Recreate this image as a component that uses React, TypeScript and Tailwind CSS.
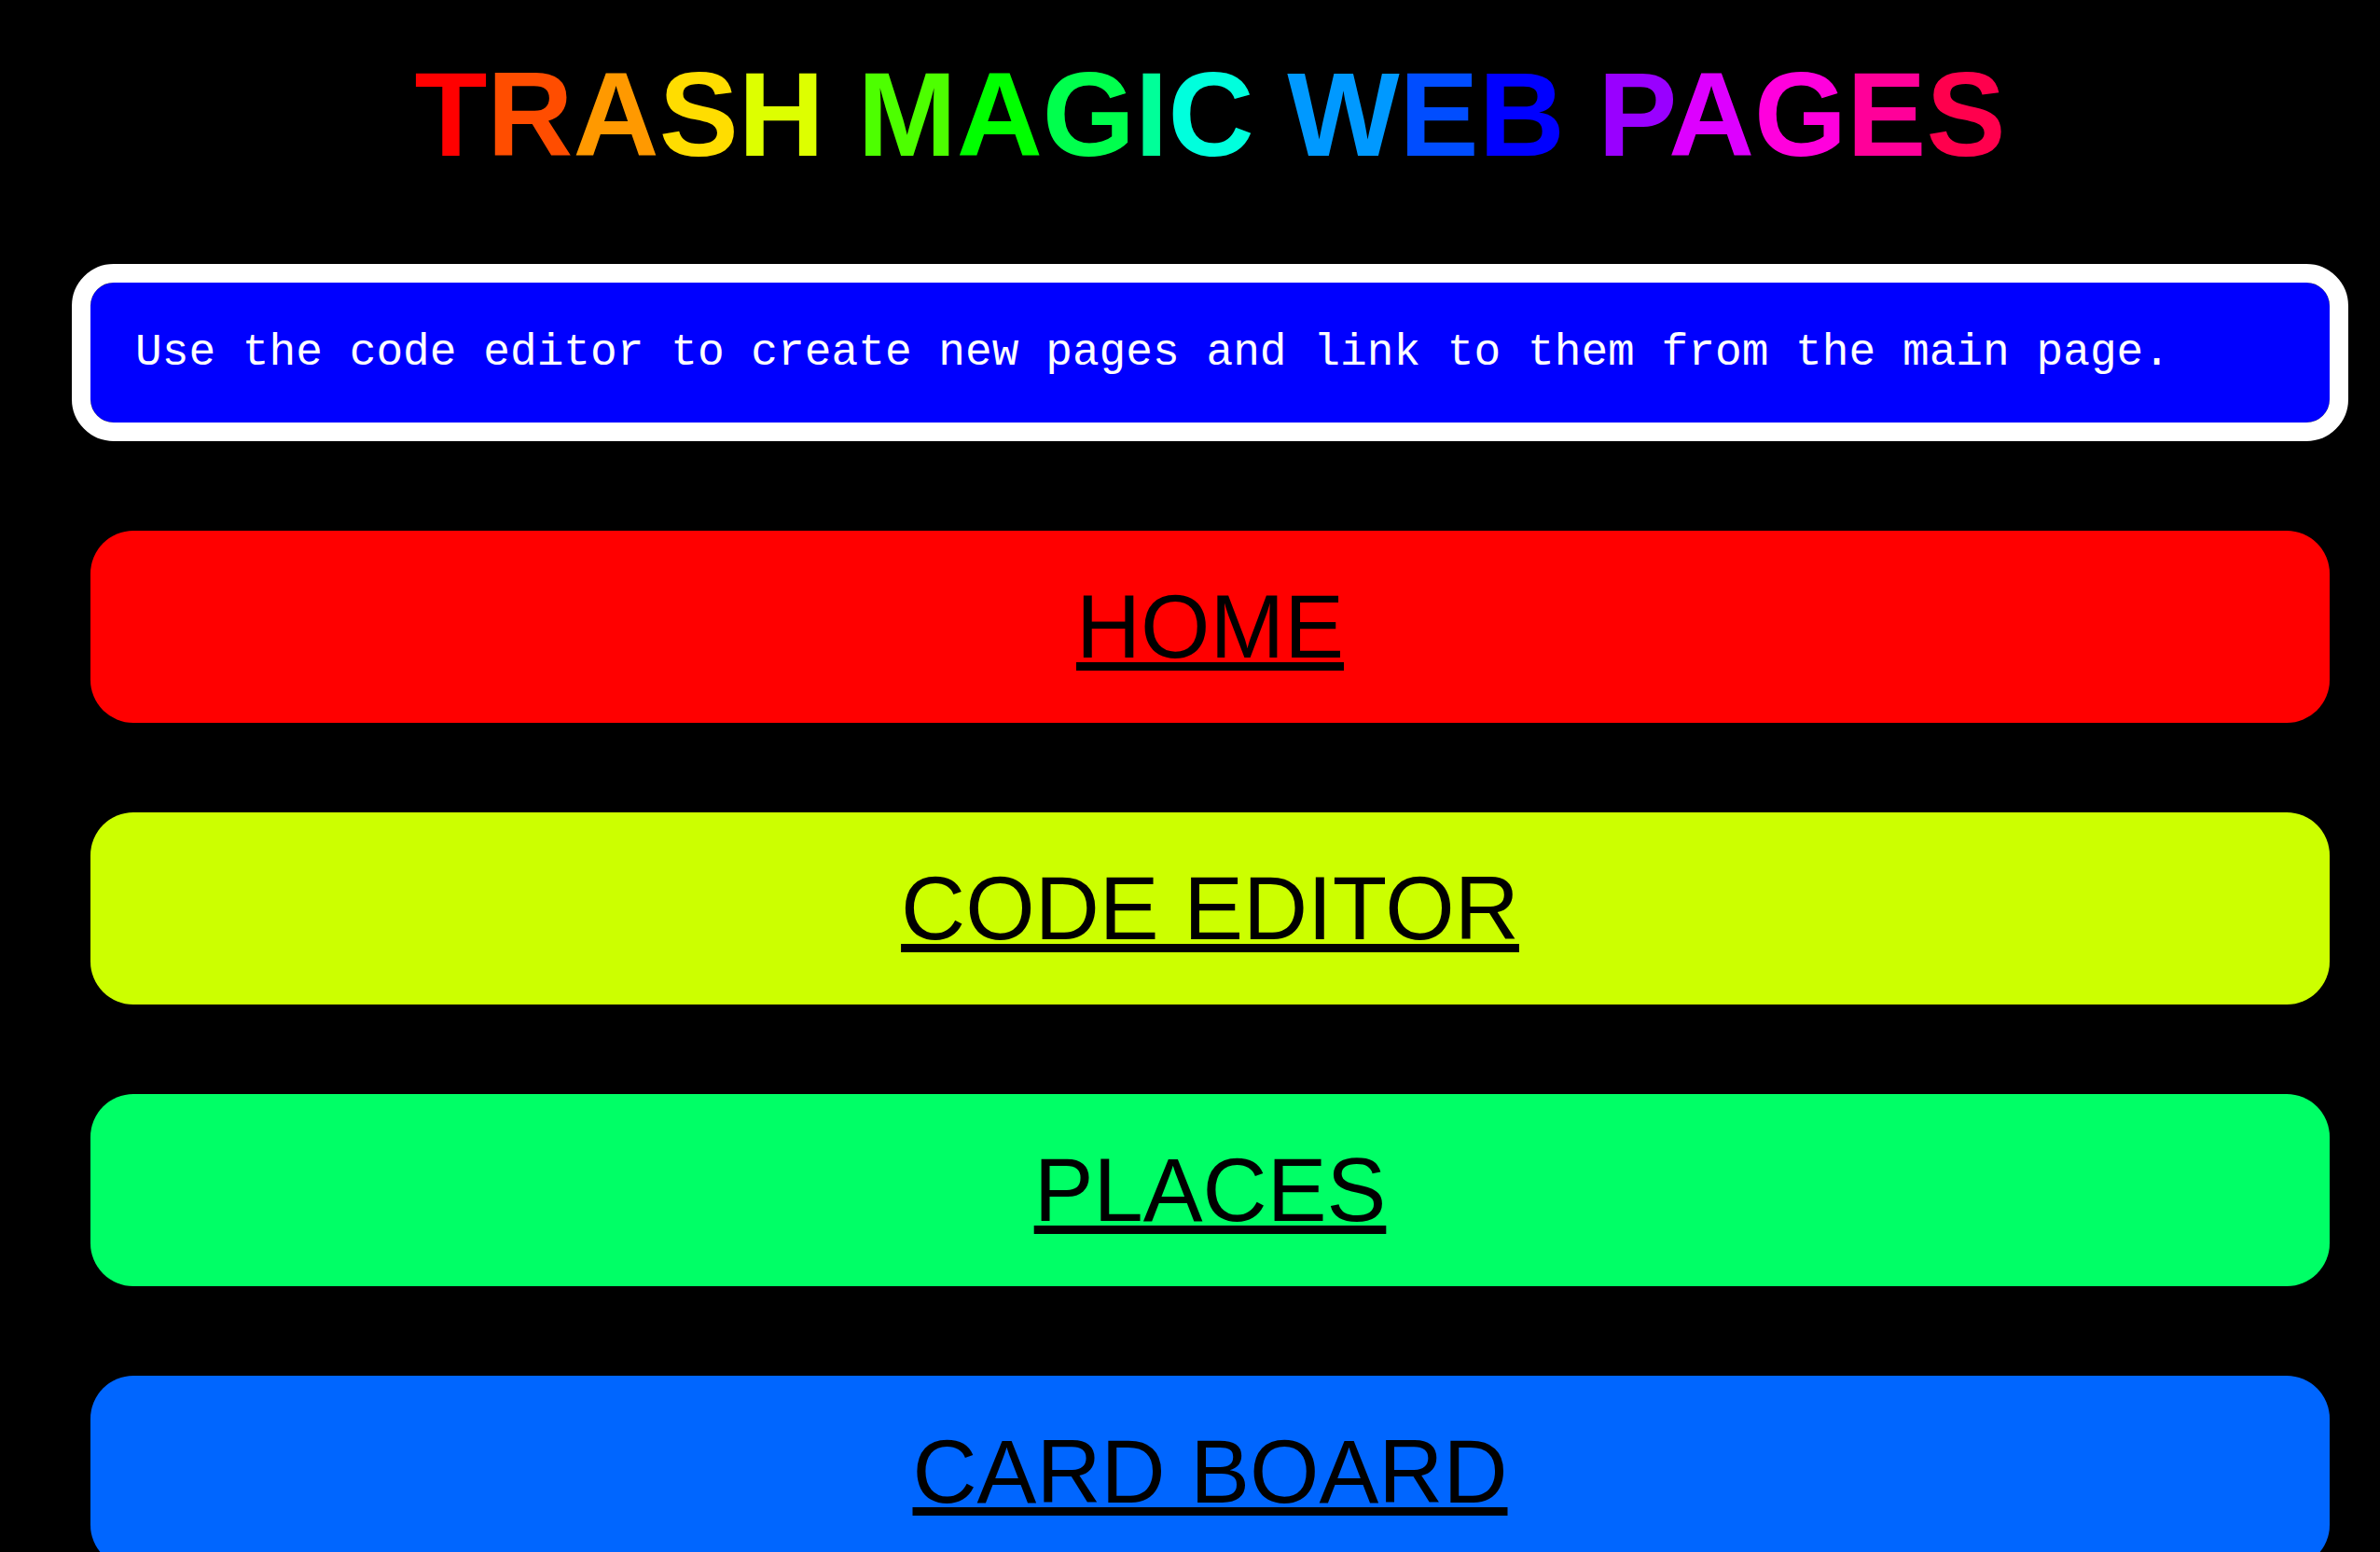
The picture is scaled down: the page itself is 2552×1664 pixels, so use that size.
import React from "react";

const letters: { ch: string; cls: string }[] = [
  { ch: "T", cls: "text-[#ff0000]" },
  { ch: "R", cls: "text-[#ff4d00]" },
  { ch: "A", cls: "text-[#ff9900]" },
  { ch: "S", cls: "text-[#ffdd00]" },
  { ch: "H", cls: "text-[#ddff00]" },
  { ch: " ", cls: "" },
  { ch: "M", cls: "text-[#4dff00]" },
  { ch: "A", cls: "text-[#00ff00]" },
  { ch: "G", cls: "text-[#00ff4d]" },
  { ch: "I", cls: "text-[#00ff99]" },
  { ch: "C", cls: "text-[#00ffdd]" },
  { ch: " ", cls: "" },
  { ch: "W", cls: "text-[#0099ff]" },
  { ch: "E", cls: "text-[#004dff]" },
  { ch: "B", cls: "text-[#0000ff]" },
  { ch: " ", cls: "" },
  { ch: "P", cls: "text-[#9900ff]" },
  { ch: "A", cls: "text-[#dd00ff]" },
  { ch: "G", cls: "text-[#ff00dd]" },
  { ch: "E", cls: "text-[#ff0099]" },
  { ch: "S", cls: "text-[#ff004d]" },
];

const links: { label: string; cls: string }[] = [
  { label: "HOME", cls: "bg-[#ff0000]" },
  { label: "CODE EDITOR", cls: "bg-[#ccff00]" },
  { label: "PLACES", cls: "bg-[#00ff66]" },
  { label: "CARD BOARD", cls: "bg-[#0066ff]" },
];

export default function App() {
  return (
    <div className="min-h-screen bg-black pl-[97px] pr-[54px] pb-[96px] font-['Liberation_Sans',Arial,sans-serif]">
      <h1 className="pt-[49px] text-center text-[127.6px] leading-[147px] font-bold whitespace-pre">
        {letters.map((l, i) => (
          <span key={i} className={l.cls}>
            {l.ch}
          </span>
        ))}
      </h1>

      <div className="mt-[107px] rounded-[25px] bg-[#0000ff] p-[48px] text-[47.85px] leading-[54px] text-white outline-[20px] outline-solid outline-white font-['Liberation_Mono','Courier_New',monospace] whitespace-nowrap">
        Use the code editor to create new pages and link to them from the main page.
      </div>

      <div className="mt-[116px] flex flex-col gap-[96px]">
        {links.map((l) => (
          <a
            key={l.label}
            href="#"
            className={`block rounded-[46px] py-[48px] text-center text-[95.7px] leading-[110px] text-black underline ${l.cls}`}
          >
            {l.label}
          </a>
        ))}
      </div>
    </div>
  );
}
